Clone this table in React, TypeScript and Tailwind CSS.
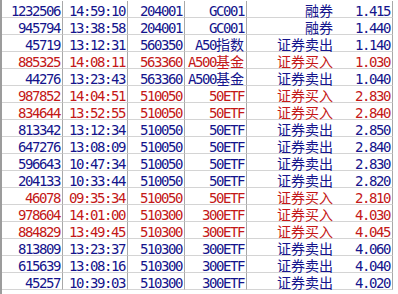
import React from 'react';

type Trade = {
  id: string;
  time: string;
  code: string;
  name: string;
  action: string;
  price: string;
  buy: boolean;
};

const trades: Trade[] = [
  { id: '1232506', time: '14:59:10', code: '204001', name: 'GC001', action: '融券', price: '1.415', buy: false },
  { id: '945794', time: '13:38:58', code: '204001', name: 'GC001', action: '融券', price: '1.440', buy: false },
  { id: '45719', time: '13:12:31', code: '560350', name: 'A50指数', action: '证券卖出', price: '1.140', buy: false },
  { id: '885325', time: '14:08:11', code: '563360', name: 'A500基金', action: '证券买入', price: '1.030', buy: true },
  { id: '44276', time: '13:23:43', code: '563360', name: 'A500基金', action: '证券卖出', price: '1.040', buy: false },
  { id: '987852', time: '14:04:51', code: '510050', name: '50ETF', action: '证券买入', price: '2.830', buy: true },
  { id: '834644', time: '13:52:55', code: '510050', name: '50ETF', action: '证券买入', price: '2.840', buy: true },
  { id: '813342', time: '13:12:34', code: '510050', name: '50ETF', action: '证券卖出', price: '2.850', buy: false },
  { id: '647276', time: '13:08:09', code: '510050', name: '50ETF', action: '证券卖出', price: '2.840', buy: false },
  { id: '596643', time: '10:47:34', code: '510050', name: '50ETF', action: '证券卖出', price: '2.830', buy: false },
  { id: '204133', time: '10:33:44', code: '510050', name: '50ETF', action: '证券卖出', price: '2.820', buy: false },
  { id: '46078', time: '09:35:34', code: '510050', name: '50ETF', action: '证券买入', price: '2.810', buy: true },
  { id: '978604', time: '14:01:00', code: '510300', name: '300ETF', action: '证券买入', price: '4.030', buy: true },
  { id: '884829', time: '13:49:45', code: '510300', name: '300ETF', action: '证券买入', price: '4.045', buy: true },
  { id: '813809', time: '13:23:37', code: '510300', name: '300ETF', action: '证券卖出', price: '4.060', buy: false },
  { id: '615639', time: '13:08:16', code: '510300', name: '300ETF', action: '证券卖出', price: '4.040', buy: false },
  { id: '45257', time: '10:39:03', code: '510300', name: '300ETF', action: '证券卖出', price: '4.020', buy: false },
];

// half-width runs get tighter tracking (7px per char), full-width runs keep 14px
function Mixed({ text }: { text: string }) {
  const runs = text.match(/[\x00-\x7f]+|[^\x00-\x7f]+/g) || [];
  return (
    <>
      {runs.map((r, i) =>
        /^[\x00-\x7f]/.test(r) ? (
          <span key={i} className="tracking-[-1.43px]">{r}</span>
        ) : (
          <span key={i} className="tracking-normal">{r}</span>
        )
      )}
    </>
  );
}

const cell =
  'h-[17px] pt-[3px] leading-[14px] text-right whitespace-nowrap border-b border-[#d4d4d4]';
const vline = 'border-r border-r-[#a8a8a8]';

export default function App() {
  return (
    <div className="w-[398px] h-[294px] bg-white overflow-hidden border-l-2 border-[#9c9c9c] text-[14px] font-['DejaVu_Sans_Mono','Noto_Sans_CJK_SC',monospace]">
      <div className="grid grid-cols-[61px_65px_57px_62px_87px_59px] w-[391px] pt-[1px]">
        {trades.map((t) => {
          const color = t.buy ? 'text-[#c41818]' : 'text-[#14148c]';
          return (
            <React.Fragment key={t.id}>
              <div className={`${cell} ${vline} ${color} pr-[2px]`}><Mixed text={t.id} /></div>
              <div className={`${cell} ${vline} ${color} pr-[2px]`}><Mixed text={t.time} /></div>
              <div className={`${cell} ${vline} ${color} pr-[2px]`}><Mixed text={t.code} /></div>
              <div className={`${cell} ${vline} ${color} pr-[2px]`}><Mixed text={t.name} /></div>
              <div className={`${cell} ${color} pr-[1px]`}><Mixed text={t.action} /></div>
              <div className={`${cell} ${vline} ${color} pr-[2px]`}><Mixed text={t.price} /></div>
            </React.Fragment>
          );
        })}
      </div>
    </div>
  );
}
